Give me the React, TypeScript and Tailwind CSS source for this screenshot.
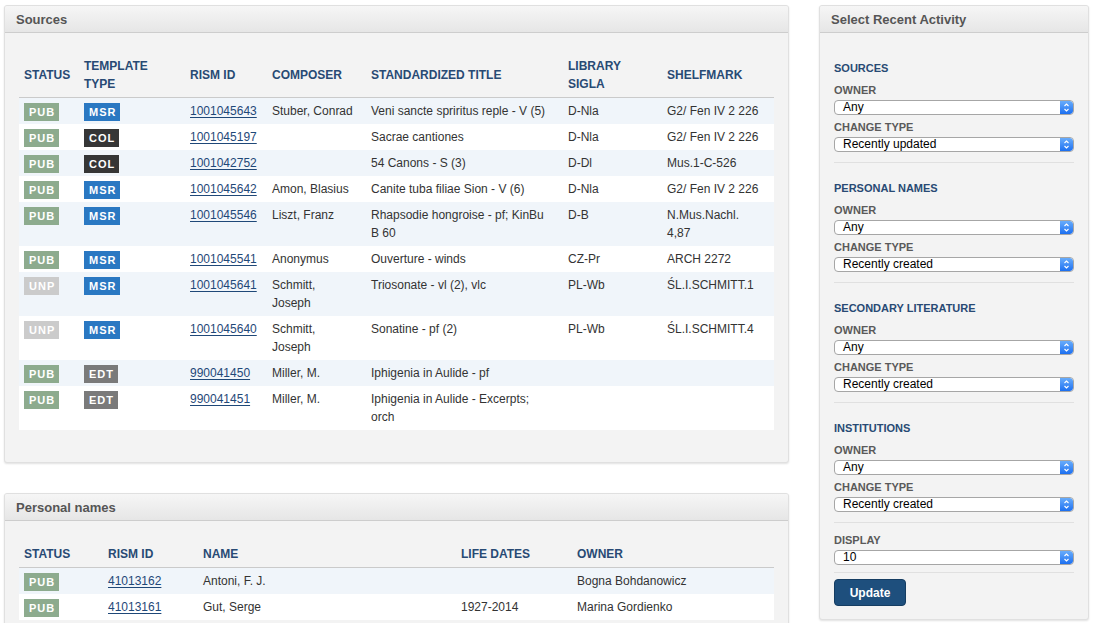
import React from 'react'

type Status = 'PUB' | 'UNP'
type Template = 'MSR' | 'COL' | 'EDT'

interface SourceRow {
  status: Status
  template: Template
  id: string
  composer: string
  title: string
  sigla: string
  shelfmark: string
}

interface PersonRow {
  status: Status
  id: string
  name: string
  dates: string
  owner: string
}

// line breaks are written out so the rows wrap the same way as the original
const sources: SourceRow[] = [
  { status: 'PUB', template: 'MSR', id: '1001045643', composer: 'Stuber, Conrad', title: 'Veni sancte spriritus reple - V (5)', sigla: 'D-Nla', shelfmark: 'G2/ Fen IV 2 226' },
  { status: 'PUB', template: 'COL', id: '1001045197', composer: '', title: 'Sacrae cantiones', sigla: 'D-Nla', shelfmark: 'G2/ Fen IV 2 226' },
  { status: 'PUB', template: 'COL', id: '1001042752', composer: '', title: '54 Canons - S (3)', sigla: 'D-Dl', shelfmark: 'Mus.1-C-526' },
  { status: 'PUB', template: 'MSR', id: '1001045642', composer: 'Amon, Blasius', title: 'Canite tuba filiae Sion - V (6)', sigla: 'D-Nla', shelfmark: 'G2/ Fen IV 2 226' },
  { status: 'PUB', template: 'MSR', id: '1001045546', composer: 'Liszt, Franz', title: 'Rhapsodie hongroise - pf; KinBu\nB 60', sigla: 'D-B', shelfmark: 'N.Mus.Nachl.\n4,87' },
  { status: 'PUB', template: 'MSR', id: '1001045541', composer: 'Anonymus', title: 'Ouverture - winds', sigla: 'CZ-Pr', shelfmark: 'ARCH 2272' },
  { status: 'UNP', template: 'MSR', id: '1001045641', composer: 'Schmitt,\nJoseph', title: 'Triosonate - vl (2), vlc', sigla: 'PL-Wb', shelfmark: 'ŚL.I.SCHMITT.1' },
  { status: 'UNP', template: 'MSR', id: '1001045640', composer: 'Schmitt,\nJoseph', title: 'Sonatine - pf (2)', sigla: 'PL-Wb', shelfmark: 'ŚL.I.SCHMITT.4' },
  { status: 'PUB', template: 'EDT', id: '990041450', composer: 'Miller, M.', title: 'Iphigenia in Aulide - pf', sigla: '', shelfmark: '' },
  { status: 'PUB', template: 'EDT', id: '990041451', composer: 'Miller, M.', title: 'Iphigenia in Aulide - Excerpts;\norch', sigla: '', shelfmark: '' },
]

const people: PersonRow[] = [
  { status: 'PUB', id: '41013162', name: 'Antoni, F. J.', dates: '', owner: 'Bogna Bohdanowicz' },
  { status: 'PUB', id: '41013161', name: 'Gut, Serge', dates: '1927-2014', owner: 'Marina Gordienko' },
]

const statusColor: Record<Status, string> = {
  PUB: 'bg-[#8dab8e]',
  UNP: 'bg-[#cbcbcb]',
}

const templateColor: Record<Template, string> = {
  MSR: 'bg-[#2a78c2]',
  COL: 'bg-[#363636]',
  EDT: 'bg-[#7a7a7a]',
}

function Badge({ label, color }: { label: string; color: string }) {
  return (
    <span className={`relative top-px inline-block h-[18px] pl-[5px] pr-[4px] align-top text-[11px] font-bold leading-[18px] tracking-[1px] text-white ${color}`}>
      {label}
    </span>
  )
}

function PanelHeader({ title }: { title: string }) {
  return (
    <div className="h-[27px] border-b border-[#cdcdcd] bg-linear-to-b from-[#f6f6f6] to-[#e6e6e6] pl-[11px] text-[13px] font-bold leading-[27px] text-[#555]">
      {title}
    </div>
  )
}

const th = 'px-[5px] py-[4px] text-left align-middle text-[12px] font-bold leading-[18px] text-[#284a74]'
const td = 'whitespace-pre-line px-[5px] py-[4px] align-top text-[12px] leading-[18px] text-[#333]'
const link = 'text-[#1f4878] underline underline-offset-2'

function Stepper() {
  return (
    <span className="flex w-[13px] items-center justify-center rounded-r-[3px] bg-linear-to-b from-[#68acfb] to-[#1b6ff0]">
      <svg width="7" height="11" viewBox="0 0 7 11" fill="none" stroke="white" strokeWidth="1.1">
        <path d="M1.5 4 L3.5 2 L5.5 4" />
        <path d="M1.5 7 L3.5 9 L5.5 7" />
      </svg>
    </span>
  )
}

function FakeSelect({ value }: { value: string }) {
  return (
    <div className="flex h-[15px] w-full items-stretch overflow-hidden rounded-[4px] border border-[#a6a6a6] bg-white">
      <span className="flex-1 pl-[8px] text-[12px] leading-[13px] text-black">{value}</span>
      <Stepper />
    </div>
  )
}

function Label({ children }: { children: React.ReactNode }) {
  return <div className="h-[14px] text-[11px] font-bold leading-[14px] text-[#5a5a5a]">{children}</div>
}

function ActivityGroup({ title, change, last }: { title: string; change: string; last?: boolean }) {
  return (
    <div>
      <div className="mb-[8px] h-[14px] text-[11px] font-bold leading-[14px] text-[#284a74]">{title}</div>
      <Label>OWNER</Label>
      <div className="mt-[3px]">
        <FakeSelect value="Any" />
      </div>
      <div className="mt-[5px]">
        <Label>CHANGE TYPE</Label>
      </div>
      <div className="mt-[3px]">
        <FakeSelect value={change} />
      </div>
      <div className={`mt-[10px] h-px bg-[#e0e0e0] ${last ? 'mb-[10px]' : 'mb-[18px]'}`} />
    </div>
  )
}

export default function App() {
  return (
    <div className="flex gap-[30px] bg-white pl-[4px] pt-[5px] font-['Liberation_Sans',Arial,sans-serif]">
      <div className="flex w-[785px] flex-col gap-[30px]">
        <div className="overflow-hidden rounded-[3px] border border-[#e0e0e0] bg-[#f3f3f3] shadow-[0_1px_2px_rgba(0,0,0,0.12)]">
          <PanelHeader title="Sources" />
          <div className="px-[14px] pb-[32px] pt-[20px]">
            <table className="w-full table-fixed border-collapse">
              <colgroup>
                <col className="w-[60px]" />
                <col className="w-[106px]" />
                <col className="w-[82px]" />
                <col className="w-[99px]" />
                <col className="w-[197px]" />
                <col className="w-[99px]" />
                <col />
              </colgroup>
              <thead>
                <tr className="border-b border-[#cacaca]">
                  <th className={th}>STATUS</th>
                  <th className={th}>TEMPLATE<br />TYPE</th>
                  <th className={th}>RISM ID</th>
                  <th className={th}>COMPOSER</th>
                  <th className={th}>STANDARDIZED TITLE</th>
                  <th className={th}>LIBRARY<br />SIGLA</th>
                  <th className={th}>SHELFMARK</th>
                </tr>
              </thead>
              <tbody>
                {sources.map((s, i) => (
                  <tr key={s.id} className={i % 2 === 0 ? 'bg-[#f0f5fa]' : 'bg-white'}>
                    <td className={td}><Badge label={s.status} color={statusColor[s.status]} /></td>
                    <td className={td}><Badge label={s.template} color={templateColor[s.template]} /></td>
                    <td className={td}><a href="#" className={link}>{s.id}</a></td>
                    <td className={`${td} whitespace-pre`}>{s.composer}</td>
                    <td className={`${td} whitespace-pre`}>{s.title}</td>
                    <td className={td}>{s.sigla}</td>
                    <td className={`${td} whitespace-pre`}>{s.shelfmark}</td>
                  </tr>
                ))}
              </tbody>
            </table>
          </div>
        </div>

        <div className="overflow-hidden rounded-[3px] border border-[#e0e0e0] bg-[#f3f3f3] shadow-[0_1px_2px_rgba(0,0,0,0.12)]">
          <PanelHeader title="Personal names" />
          <div className="px-[14px] pb-[32px] pt-[20px]">
            <table className="w-full table-fixed border-collapse">
              <colgroup>
                <col className="w-[84px]" />
                <col className="w-[95px]" />
                <col className="w-[258px]" />
                <col className="w-[116px]" />
                <col />
              </colgroup>
              <thead>
                <tr className="border-b border-[#cacaca]">
                  <th className={th}>STATUS</th>
                  <th className={th}>RISM ID</th>
                  <th className={th}>NAME</th>
                  <th className={th}>LIFE DATES</th>
                  <th className={th}>OWNER</th>
                </tr>
              </thead>
              <tbody>
                {people.map((p, i) => (
                  <tr key={p.id} className={i % 2 === 0 ? 'bg-[#f0f5fa]' : 'bg-white'}>
                    <td className={td}><Badge label={p.status} color={statusColor[p.status]} /></td>
                    <td className={td}><a href="#" className={link}>{p.id}</a></td>
                    <td className={td}>{p.name}</td>
                    <td className={td}>{p.dates}</td>
                    <td className={td}>{p.owner}</td>
                  </tr>
                ))}
              </tbody>
            </table>
          </div>
        </div>
      </div>

      <div className="w-[270px] self-start">
        <div className="overflow-hidden rounded-[3px] border border-[#e0e0e0] bg-[#f3f3f3] shadow-[0_1px_2px_rgba(0,0,0,0.12)]">
          <PanelHeader title="Select Recent Activity" />
          <div className="px-[14px] pb-[13px] pt-[28px]">
            <ActivityGroup title="SOURCES" change="Recently updated" />
            <ActivityGroup title="PERSONAL NAMES" change="Recently created" />
            <ActivityGroup title="SECONDARY LITERATURE" change="Recently created" />
            <ActivityGroup title="INSTITUTIONS" change="Recently created" last />
            <Label>DISPLAY</Label>
            <div className="mt-[3px]">
              <FakeSelect value="10" />
            </div>
            <div className="mb-[6px] mt-[7px] h-px bg-[#e0e0e0]" />
            <button
              type="button"
              className="h-[27px] w-[72px] rounded-[4px] border border-[#153d62] bg-[#1e4f7d] text-[12px] font-bold text-white"
            >
              Update
            </button>
          </div>
        </div>
      </div>
    </div>
  )
}
